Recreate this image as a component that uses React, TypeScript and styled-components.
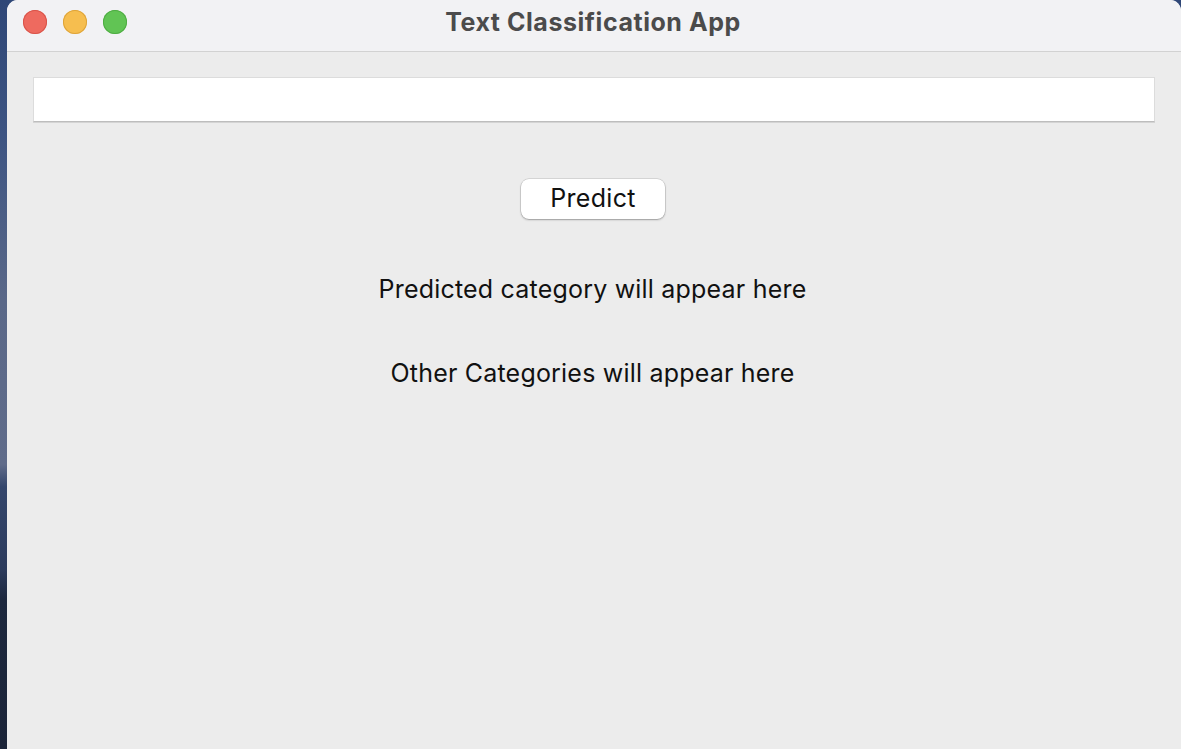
import React from "react";
import styled, { createGlobalStyle } from "styled-components";

const Global = createGlobalStyle`
  html, body { margin: 0; padding: 0; }
  body {
    width: 1181px;
    height: 749px;
    overflow: hidden;
    font-family: Inter, "Liberation Sans", Arial, sans-serif;
    background: linear-gradient(180deg, #2f4777 0%, #3d5482 18%, #5a6888 40%, #606c8a 62%, #34466c 65%, #2c3b5c 76%, #1d283e 80%, #1b2438 100%);
  }
`;

const Desktop = styled.div`
  display: flex;
  height: 749px;
  padding-left: 7px;
  box-sizing: border-box;
`;

const Window = styled.div`
  flex: 1;
  display: flex;
  flex-direction: column;
  background: #ececec;
  border-radius: 11px 11px 0 0;
  overflow: hidden;
`;

const TitleBar = styled.div`
  position: relative;
  height: 51px;
  flex: 0 0 51px;
  background: #f2f2f4;
  border-bottom: 1px solid #d2d2d2;
  display: flex;
  align-items: center;
  justify-content: center;
`;

const Lights = styled.div`
  position: absolute;
  left: 16px;
  top: 10px;
  display: flex;
  gap: 16px;
`;

const Light = styled.span<{ $fill: string; $edge: string }>`
  width: 24px;
  height: 24px;
  border-radius: 50%;
  background: ${(p) => p.$fill};
  box-shadow: inset 0 0 0 1px ${(p) => p.$edge};
`;

const Title = styled.div`
  font-family: Inter, "Liberation Sans", Arial, sans-serif;
  font-weight: 700;
  font-size: 25px;
  letter-spacing: 0.55px;
  color: #4b4b4b;
  margin-top: -7px;
  margin-left: -2px;
`;

const Content = styled.div`
  flex: 1;
  display: flex;
  flex-direction: column;
  align-items: center;
  padding: 25px 26px 0;
`;

const Entry = styled.div`
  align-self: stretch;
  height: 45px;
  background: #ffffff;
  border: 1px solid #dcdcdc;
  border-bottom: 1px solid #bdbdbd;
  box-shadow: 0 1px 0 #d4d4d4;
  box-sizing: border-box;
`;

const Button = styled.button`
  margin-top: 57px;
  width: 144px;
  height: 40px;
  background: #ffffff;
  border: none;
  border-radius: 8px;
  box-shadow: 0 0 0 0.5px rgba(0, 0, 0, 0.18), 0 1px 2px rgba(0, 0, 0, 0.28);
  font-family: Inter, "Liberation Sans", Arial, sans-serif;
  font-size: 25px;
  letter-spacing: 0.3px;
  color: #111;
  padding: 0 0 2px;
  margin-left: -2px;
`;

const Label = styled.div<{ $top: number }>`
  margin-top: ${(p) => p.$top}px;
  font-size: 25px;
  letter-spacing: 0.2px;
  line-height: 28px;
  color: #111;
  margin-left: -3px;
`;

export default function App() {
  return (
    <>
      <Global />
      <Desktop>
        <Window>
          <TitleBar>
            <Lights>
              <Light $fill="#ee6a5f" $edge="#d9544a" />
              <Light $fill="#f6be4f" $edge="#dea43a" />
              <Light $fill="#61c454" $edge="#4fac43" />
            </Lights>
            <Title>Text Classification App</Title>
          </TitleBar>
          <Content>
            <Entry />
            <Button>Predict</Button>
            <Label $top={56}>Predicted category will appear here</Label>
            <Label $top={56}>Other Categories will appear here</Label>
          </Content>
        </Window>
      </Desktop>
    </>
  );
}
